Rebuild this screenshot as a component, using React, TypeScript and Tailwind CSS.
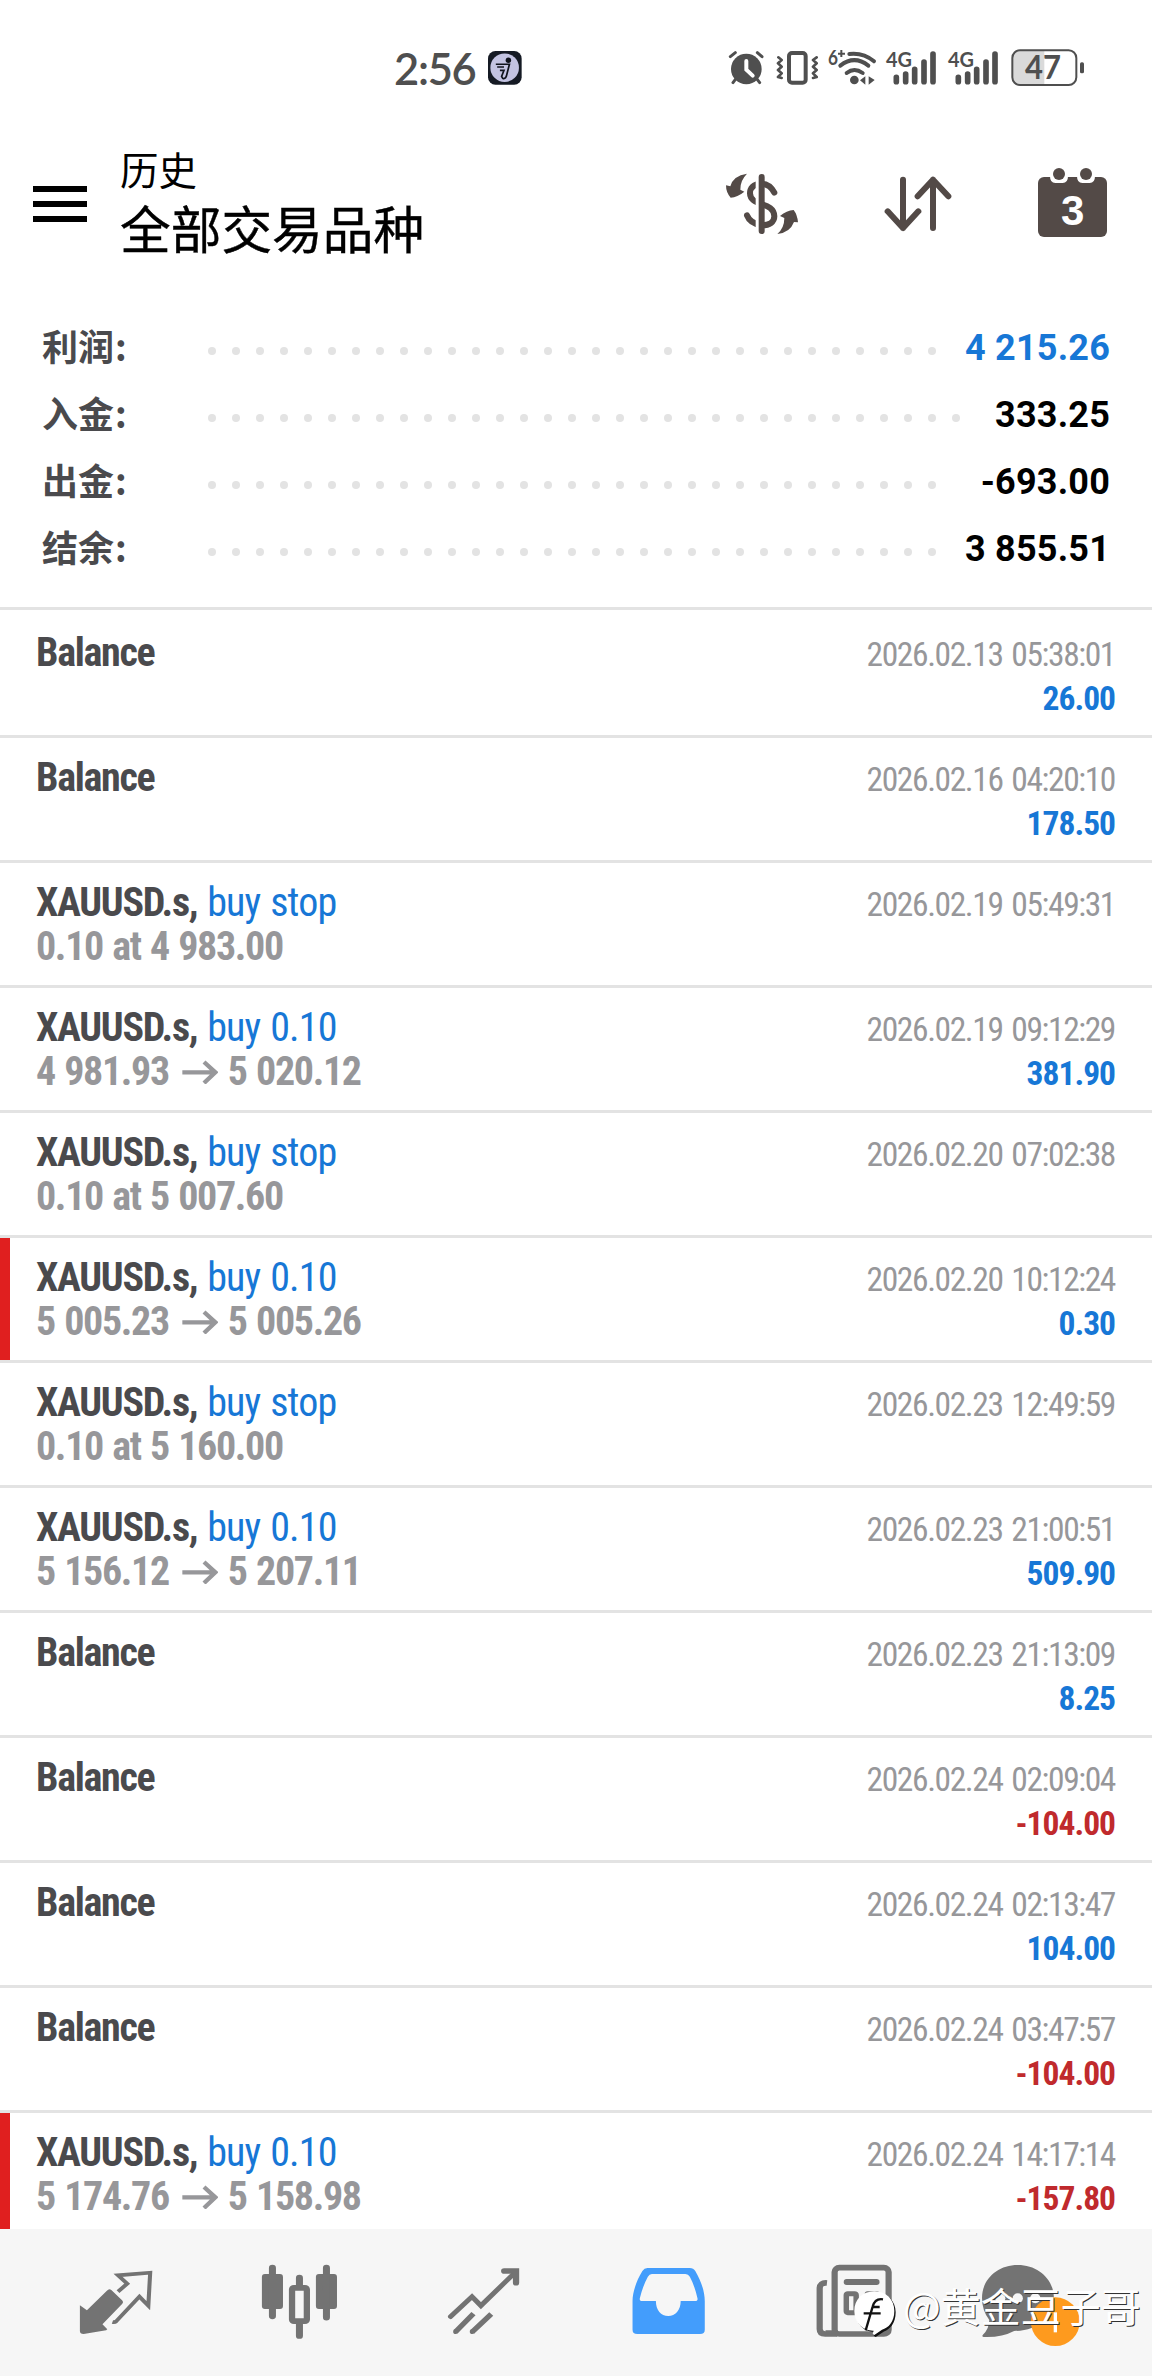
import React from 'react';

interface Summary {
    label: string
    value: string
    dots: number
    blue?: boolean
}

interface Deal {
    kind: "balance" | "order" | "trade"
    action?: string
    info?: string
    to?: string
    date: string
    value?: string
    marked?: boolean
}

const summary: Summary[] = [
    { label: "利润", value: "4 215.26", dots: 31, blue: true },
    { label: "入金", value: "333.25", dots: 32 },
    { label: "出金", value: "-693.00", dots: 31 },
    { label: "结余", value: "3 855.51", dots: 31 },
]

const deals: Deal[] = [
    { kind: "balance", date: "2026.02.13 05:38:01", value: "26.00" },
    { kind: "balance", date: "2026.02.16 04:20:10", value: "178.50" },
    { kind: "order", action: "buy stop", info: "0.10 at 4 983.00", date: "2026.02.19 05:49:31" },
    { kind: "trade", action: "buy 0.10", info: "4 981.93", to: "5 020.12", date: "2026.02.19 09:12:29", value: "381.90" },
    { kind: "order", action: "buy stop", info: "0.10 at 5 007.60", date: "2026.02.20 07:02:38" },
    { kind: "trade", action: "buy 0.10", info: "5 005.23", to: "5 005.26", date: "2026.02.20 10:12:24", value: "0.30", marked: true },
    { kind: "order", action: "buy stop", info: "0.10 at 5 160.00", date: "2026.02.23 12:49:59" },
    { kind: "trade", action: "buy 0.10", info: "5 156.12", to: "5 207.11", date: "2026.02.23 21:00:51", value: "509.90" },
    { kind: "balance", date: "2026.02.23 21:13:09", value: "8.25" },
    { kind: "balance", date: "2026.02.24 02:09:04", value: "-104.00" },
    { kind: "balance", date: "2026.02.24 02:13:47", value: "104.00" },
    { kind: "balance", date: "2026.02.24 03:47:57", value: "-104.00" },
    { kind: "trade", action: "buy 0.10", info: "5 174.76", to: "5 158.98", date: "2026.02.24 14:17:14", value: "-157.80", marked: true },
]

const Signal = () => {
    return (
        <svg className="w-[52px] h-10 overflow-visible" viewBox="530 50 156 120">
            <path d="M561 141V154M589 131V154M616 117V154M644 95V154M671 71V154" stroke="#4f4f4f" strokeWidth="17" strokeLinecap="round" />
            <text x="530" y="110" fontSize="64" fontWeight="700" fill="#4f4f4f" textLength="78" lengthAdjust="spacingAndGlyphs" stroke="#fff" strokeWidth="4" paintOrder="stroke">4G</text>
        </svg>
    )
}

const StatusBar = () => {
    return (
        <div className="flex h-[136px] font-[Lato,sans-serif] text-[#4f4f4f]">
            <div className="flex items-center h-10 mt-12 ml-[394px] w-[334px]">
                <span className="text-[43.5px] leading-10 font-semibold tracking-[-1.3px] w-[94px] whitespace-nowrap">2:56</span>
                <svg className="w-[34px] h-[34px]" viewBox="354 66 100 100">
                    <rect x="354" y="66" width="99" height="99" rx="22" fill="#151a24" />
                    <circle cx="403" cy="115" r="42" fill="#c3c3e2" />
                    <circle cx="414" cy="93" r="8" fill="#10131c" />
                    <path d="M377 105H417L408 140Q404 150 397 146L394 141L401 123H389M381 113H401" fill="none" stroke="#10131c" strokeWidth="5" />
                </svg>
            </div>
            <div className="flex mt-[47px] h-10">
                <svg className="w-9 h-10" viewBox="56 50 108 120">
                    <path d="M63 79L78 67M144 67L158 79M80 145L71 157M142 145L151 157" stroke="#4f4f4f" strokeWidth="9" strokeLinecap="round" />
                    <circle cx="111" cy="116" r="46" fill="#4f4f4f" />
                    <path d="M111 92V118L130 136" fill="none" stroke="#fff" strokeWidth="12" strokeLinecap="round" />
                </svg>
                <svg className="ml-3 w-[42px] h-10" viewBox="200 50 126 120">
                    <rect x="239" y="68" width="50" height="89" rx="9" fill="none" stroke="#4f4f4f" strokeWidth="12" />
                    <path d="M207 81L217 89L206 99L217 109L206 119L217 129L206 140L217 143M322 81L311 89L322 99L311 109L322 119L311 129L322 140L311 143" fill="none" stroke="#4f4f4f" strokeWidth="8" strokeLinecap="round" strokeLinejoin="round" />
                </svg>
                <svg className="ml-[10px] w-[48px] h-10 overflow-visible" viewBox="356 50 144 120">
                    <path d="M420 71Q462 66 494 93M393 106Q435 73 477 106M412 128Q435 110 460 128" fill="none" stroke="#4f4f4f" strokeWidth="12" strokeLinecap="round" />
                    <circle cx="435" cy="149" r="13" fill="#4f4f4f" />
                    <path d="M452 150L468 138V163ZM478 138L496 149L478 163Z" fill="#4f4f4f" />
                    <text x="356" y="105" fontSize="64" fontWeight="700" fill="#4f4f4f" textLength="30" lengthAdjust="spacingAndGlyphs">6</text>
                    <path d="M396 59V80M386 70H407" stroke="#4f4f4f" strokeWidth="6" />
                </svg>
                <div className="ml-[10px] flex gap-[10px]">
                    <Signal />
                    <Signal />
                </div>
                <svg className="ml-[11px] w-[74px] h-10" viewBox="902 50 222 120">
                    <path d="M926 60H1002V164H926Q907 164 907 144V80Q907 60 926 60Z" fill="#dadada" />
                    <rect x="906" y="60" width="192" height="104" rx="23" fill="none" stroke="#4f4f4f" strokeWidth="6" />
                    <rect x="1109" y="96" width="12" height="33" rx="5" fill="#4f4f4f" />
                    <text x="944" y="147" fontSize="96" fontWeight="700" fill="#4f4f4f" textLength="108" lengthAdjust="spacingAndGlyphs">47</text>
                </svg>
            </div>
        </div>
    )
}

const Header = () => {
    return (
        <div className="flex h-[176px] text-black">
            <div className="flex flex-col gap-[9px] ml-[33px] mt-[50px] w-[54px]">
                <div className="h-1.5 bg-black"></div>
                <div className="h-1.5 bg-black"></div>
                <div className="h-1.5 bg-black"></div>
            </div>
            <div className="ml-[33px] mt-1.5 w-[570px] font-['Noto_Sans_CJK_SC',sans-serif]">
                <div className="text-[38.5px] leading-[52px]">历史</div>
                <div className="text-[50.7px] leading-[67px] [-webkit-text-stroke:0.4px_#000]">全部交易品种</div>
            </div>
            <svg className="w-[462px] h-[130px] mt-1" viewBox="0 0 1386 390">
                <g fill="none" stroke="#534a47" strokeLinecap="round">
                    <path d="M253 158Q240 132 215 131C188 131 180 147 180 160C180 200 253 184 253 229C253 246 239 256 215 256Q180 250 171 226" strokeWidth="18" />
                    <path d="M202 100V290" stroke="#fff" strokeWidth="10" strokeLinecap="butt" />
                    <path d="M215 111V273" strokeWidth="18" />
                    <path d="M639 119V264M593 214L639 264L685 214M729 264V119M683 169L729 119L775 169" strokeWidth="18" strokeLinejoin="round" />
                </g>
                <g fill="#534a47">
                    <path d="M171 101Q129 107 121 139L108 136Q108 158 122 173Q142 172 163 155L151 149Q150 122 171 101Z" />
                    <path d="M262 282Q300 278 312 246L324 247Q322 224 311 210Q290 212 270 228L283 234Q283 264 262 282Z" />
                    <rect x="1044" y="111" width="207" height="180" rx="18" />
                    <path d="M1080 109H1134Q1134 129 1118 129H1096Q1080 129 1080 109ZM1161 109H1215Q1215 129 1199 129H1177Q1161 129 1161 109Z" fill="#fff" />
                    <circle cx="1107" cy="102" r="18" />
                    <circle cx="1188" cy="102" r="18" />
                </g>
                <text x="1148" y="254" textAnchor="middle" fontSize="126" fontWeight="700" fill="#fff" className="font-['Liberation_Sans',sans-serif]">3</text>
            </svg>
        </div>
    )
}

const SummaryRow = ({ label, value, dots, blue }: Summary) => {
    return (
        <div className="flex items-center h-[67px] pl-[42px] pr-[42px]">
            <div className="w-[166px] pb-1 text-[36px] leading-[63px] font-bold text-[#4a4a4d] font-['Noto_Sans_CJK_SC',sans-serif]">
                {label}<span className="ml-px">:</span>
            </div>
            <div className="flex gap-4 pt-1.5">
                {Array.from({ length: dots }, (_, i) => (
                    <div key={i} className="size-2 rounded-full bg-[#e3e3e3]"></div>
                ))}
            </div>
            <div className={`ml-auto text-[36px] font-bold tracking-[0.2px] whitespace-nowrap ${blue ? "text-[#1777d6]" : "text-black"}`}>{value}</div>
        </div>
    )
}

const DealRow = ({ kind, action, info, to, date, value, marked }: Deal) => {
    return (
        <div className="relative flex shrink-0 justify-between h-[125px] pl-9 pr-[37px] border-b-3 border-[#e3e3e3] font-stretch-condensed">
            {marked && <div className="absolute left-0 top-0 w-2.5 h-full bg-[#e01f1f]"></div>}
            <div className="pt-[18px] text-[40px] leading-[44px] whitespace-nowrap">
                <div>
                    <span className="font-bold tracking-[-1.3px] [word-spacing:2px] text-[#4a4a4d]">{kind === "balance" ? "Balance" : "XAUUSD.s, "}</span>
                    {action && <span className="tracking-[-0.85px] [word-spacing:1.5px] text-[#1777d6]">{action}</span>}
                </div>
                {info && <div className="flex items-center font-bold tracking-[-1.35px] [word-spacing:1.5px] text-[#97979a]">
                    {info}
                    {to && <svg className="w-9 h-6 ml-[13px] mr-[10px]" viewBox="542 174 108 72">
                        <path d="M543 211H644M608 180L642 211L608 243" fill="none" stroke="#97979a" strokeWidth="13" />
                    </svg>}
                    {to}
                </div>}
            </div>
            <div className="pt-5 text-[33.5px] leading-[44px] text-right whitespace-nowrap">
                <div className="tracking-[-1.4px] [word-spacing:2.5px] text-[#97979a]">{date}</div>
                {value && <div className={`font-bold tracking-[-1px] ${value.startsWith("-") ? "text-[#c02a2d]" : "text-[#1777d6]"}`}>{value}</div>}
            </div>
        </div>
    )
}

const NavBar = () => {
    return (
        <div className="relative flex shrink-0 h-[147px] px-6 bg-[#f6f6f6]">
            <svg className="w-[184px] h-[147px]" viewBox="64.9 87 497.4 441" preserveAspectRatio="none">
                <path d="M216 316L235 331L289 272Q295 264 301 270L330 301Q335 307 330 312L277 373L290 388L287 391L226 402Q216 402 216 393Z" fill="#737373" />
                <path d="M319 275L344 251L319 226L406 218L401 317L377 290L314 364Q310 368 304 366" fill="none" stroke="#737373" strokeWidth="11" />
            </svg>
            <svg className="w-[184px] h-[147px]" viewBox="562.3 87 497.4 441" preserveAspectRatio="none">
                <rect x="708" y="222" width="57" height="105" rx="8" ry="9" fill="#737373" />
                <rect x="854" y="222" width="57" height="105" rx="8" ry="9" fill="#737373" />
                <path d="M736.5 204V348M809.5 234V260M809.5 370V407M882.5 204V352" stroke="#737373" strokeWidth="19" strokeLinecap="round" />
                <rect x="789.5" y="263.5" width="40" height="100" rx="5" fill="#f6f6f6" stroke="#737373" strokeWidth="17" />
            </svg>
            <svg className="w-[184px] h-[147px]" viewBox="1059.7 87 497.4 441" preserveAspectRatio="none">
                <g fill="none" stroke="#737373">
                    <path d="M1218 350L1276 290L1300 317L1392 218" strokeWidth="14" strokeLinecap="round" />
                    <path d="M1232 395L1280 341M1277 395L1328 342" strokeWidth="15" />
                    <path d="M1363 213H1395V248" strokeWidth="17" strokeLinecap="round" />
                </g>
                <circle cx="1232" cy="395" r="7" fill="#737373" />
                <circle cx="1277" cy="395" r="7" fill="#737373" />
            </svg>
            <svg className="w-[184px] h-[147px]" viewBox="-11 87 504.4 441" preserveAspectRatio="none">
                <path d="M185 204H301Q311 204 316 213C332 243 342 275 342 303V389Q342 402 329 402H157Q144 402 144 389V303C144 275 156 239 171 213Q176 204 185 204Z" fill="#439dfc" />
                <path d="M197 222H289Q297 222 301 230Q314 256 322 295Q324 303 314 303H276C276 330 261 348 242 348C222 348 208 330 208 303H172Q162 303 164 295Q172 258 186 230Q190 222 197 222Z" fill="#f6f6f6" />
            </svg>
            <svg className="w-[184px] h-[147px]" viewBox="493.4 87 504.4 441" preserveAspectRatio="none">
                <g fill="none" stroke="#737373" strokeWidth="17">
                    <rect x="698" y="203" width="148" height="199" rx="13" />
                    <path d="M677 249Q657 247 657 266V387Q657 402 672 402H705" />
                    <path d="M695 385V395H673" strokeWidth="8" />
                </g>
                <rect x="723" y="237" width="98" height="18" rx="8" fill="#737373" />
                <rect x="730" y="281" width="27" height="57" rx="4" fill="none" stroke="#737373" strokeWidth="15" />
                <path d="M788 281H814" stroke="#737373" strokeWidth="15" strokeLinecap="round" />
            </svg>
            <svg className="w-[184px] h-[147px]" viewBox="997.8 87 504.4 441" preserveAspectRatio="none">
                <path d="M1200 195C1256 195 1299 238 1299 294C1299 350 1256 393 1190 393Q1156 413 1107 411Q1101 410 1104 405Q1122 386 1122 360Q1102 332 1102 294C1102 238 1144 195 1200 195Z" fill="#737373" />
                <g fill="#f6f6f6">
                    <ellipse cx="1152" cy="295" rx="14" ry="15" />
                    <ellipse cx="1200" cy="295" rx="14" ry="15" />
                    <ellipse cx="1248" cy="295" rx="14" ry="15" />
                </g>
                <ellipse cx="1303" cy="365" rx="67" ry="73" fill="#fe9a1e" />
                <path d="M1303 337V397" stroke="#fff" strokeWidth="9" />
            </svg>
            <div className="absolute left-[853px] top-[46px] flex items-start text-white">
                <svg className="w-[43px] h-[49px] mt-3.5" viewBox="160 100 129 147">
                    <path d="M228 111C264 111 288 136 288 170C288 204 270 222 252 228L228 244L222 240L226 229C194 230 168 206 168 170C168 136 192 111 228 111Z" fill="#111" />
                    <path d="M224 107C260 107 284 132 284 166C284 199 266 217 247 222L224 238L219 234L222 225C190 226 164 202 164 166C164 132 188 107 224 107Z" fill="#fff" />
                    <path d="M250 131C232 128 223 138 219 153L198 224M192 173H243M221 154H240" fill="none" stroke="#111" strokeWidth="7" />
                </svg>
                <span className="ml-[7px] text-[40px] leading-[60px] whitespace-nowrap font-['Noto_Sans_CJK_SC',sans-serif] [text-shadow:1px_1px_0.5px_#333]">@黄金豆子哥</span>
            </div>
        </div>
    )
}

export default function App() {
    return (
        <div className="flex flex-col w-[1152px] h-[2376px] overflow-hidden bg-white font-[Roboto,sans-serif]">
            <StatusBar />
            <Header />
            <div className="h-[298px] pt-[2px] border-b-3 border-[#e3e3e3]">
                {summary.map((row) => <SummaryRow key={row.label} {...row} />)}
            </div>
            <div className="flex flex-col flex-1 min-h-0 overflow-hidden pt-[3px]">
                {deals.map((deal) => <DealRow key={deal.date} {...deal} />)}
            </div>
            <NavBar />
        </div>
    )
}
